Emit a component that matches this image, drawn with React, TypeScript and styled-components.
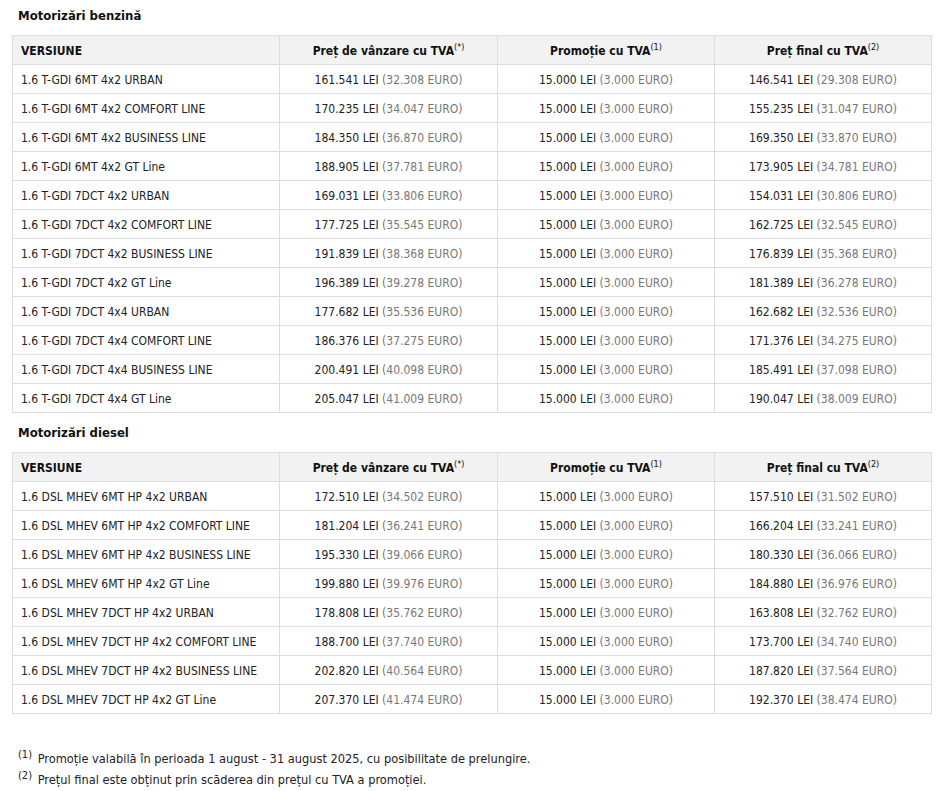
import React from "react";
import styled, { createGlobalStyle } from "styled-components";

const Global = createGlobalStyle`
  html, body { margin: 0; padding: 0; background: #fff; }
  body { font-family: "DejaVu Sans Condensed", "DejaVu Sans", Tahoma, sans-serif; color: #222; }
`;

const Page = styled.div`
  padding: 6px 12px 0 12px;
  width: 944px;
  box-sizing: border-box;
`;

const SectionTitle = styled.h3<{ $top?: number }>`
  margin: ${(p) => p.$top ?? 0}px 0 9px 0;
  padding-left: 6px;
  font-size: 13px;
  line-height: 20px;
  font-weight: bold;
  color: #111;
`;

const Table = styled.table`
  width: 919px;
  border-collapse: collapse;
  table-layout: fixed;
  font-size: 12px;
`;

const Th = styled.th<{ $align?: string }>`
  background: #f2f2f2;
  border: 1px solid #dddddd;
  height: 27px;
  padding: 1px 8px 0 8px;
  text-align: ${(p) => p.$align ?? "center"};
  font-weight: bold;
  color: #111;
  white-space: nowrap;
`;

const Td = styled.td<{ $align?: string }>`
  border: 1px solid #dddddd;
  height: 27px;
  padding: 1px 8px 0 8px;
  text-align: ${(p) => p.$align ?? "center"};
  color: #222;
  white-space: nowrap;
`;

const Sup = styled.sup`
  font-size: 9px;
  line-height: 0;
  vertical-align: 5px;
  font-weight: normal;
`;

const Euro = styled.span`
  color: #777;
`;

const Notes = styled.div`
  margin-top: 34px;
  padding-left: 6px;
  font-size: 12.7px;
  line-height: 21px;
  color: #222;
`;

const NoteSup = styled.sup`
  font-size: 11px;
  line-height: 0;
  vertical-align: 5px;
  margin-right: 2px;
`;

type Row = [string, string, string, string, string];

const benzina: Row[] = [
  ["1.6 T-GDI 6MT 4x2 URBAN", "161.541", "32.308", "146.541", "29.308"],
  ["1.6 T-GDI 6MT 4x2 COMFORT LINE", "170.235", "34.047", "155.235", "31.047"],
  ["1.6 T-GDI 6MT 4x2 BUSINESS LINE", "184.350", "36.870", "169.350", "33.870"],
  ["1.6 T-GDI 6MT 4x2 GT Line", "188.905", "37.781", "173.905", "34.781"],
  ["1.6 T-GDI 7DCT 4x2 URBAN", "169.031", "33.806", "154.031", "30.806"],
  ["1.6 T-GDI 7DCT 4x2 COMFORT LINE", "177.725", "35.545", "162.725", "32.545"],
  ["1.6 T-GDI 7DCT 4x2 BUSINESS LINE", "191.839", "38.368", "176.839", "35.368"],
  ["1.6 T-GDI 7DCT 4x2 GT Line", "196.389", "39.278", "181.389", "36.278"],
  ["1.6 T-GDI 7DCT 4x4 URBAN", "177.682", "35.536", "162.682", "32.536"],
  ["1.6 T-GDI 7DCT 4x4 COMFORT LINE", "186.376", "37.275", "171.376", "34.275"],
  ["1.6 T-GDI 7DCT 4x4 BUSINESS LINE", "200.491", "40.098", "185.491", "37.098"],
  ["1.6 T-GDI 7DCT 4x4 GT Line", "205.047", "41.009", "190.047", "38.009"],
];

const diesel: Row[] = [
  ["1.6 DSL MHEV 6MT HP 4x2 URBAN", "172.510", "34.502", "157.510", "31.502"],
  ["1.6 DSL MHEV 6MT HP 4x2 COMFORT LINE", "181.204", "36.241", "166.204", "33.241"],
  ["1.6 DSL MHEV 6MT HP 4x2 BUSINESS LINE", "195.330", "39.066", "180.330", "36.066"],
  ["1.6 DSL MHEV 6MT HP 4x2 GT Line", "199.880", "39.976", "184.880", "36.976"],
  ["1.6 DSL MHEV 7DCT HP 4x2 URBAN", "178.808", "35.762", "163.808", "32.762"],
  ["1.6 DSL MHEV 7DCT HP 4x2 COMFORT LINE", "188.700", "37.740", "173.700", "34.740"],
  ["1.6 DSL MHEV 7DCT HP 4x2 BUSINESS LINE", "202.820", "40.564", "187.820", "37.564"],
  ["1.6 DSL MHEV 7DCT HP 4x2 GT Line", "207.370", "41.474", "192.370", "38.474"],
];

const Price = ({ lei, euro }: { lei: string; euro: string }) => (
  <>
    {lei} LEI <Euro>({euro} EURO)</Euro>
  </>
);

const PriceTable = ({ rows }: { rows: Row[] }) => (
  <Table>
    <colgroup>
      <col style={{ width: 267 }} />
      <col style={{ width: 218 }} />
      <col style={{ width: 217 }} />
      <col style={{ width: 217 }} />
    </colgroup>
    <thead>
      <tr>
        <Th $align="left">VERSIUNE</Th>
        <Th>
          Preț de vânzare cu TVA<Sup>(*)</Sup>
        </Th>
        <Th>
          Promoție cu TVA<Sup>(1)</Sup>
        </Th>
        <Th>
          Preț final cu TVA<Sup>(2)</Sup>
        </Th>
      </tr>
    </thead>
    <tbody>
      {rows.map((r) => (
        <tr key={r[0]}>
          <Td $align="left">{r[0]}</Td>
          <Td>
            <Price lei={r[1]} euro={r[2]} />
          </Td>
          <Td>
            <Price lei="15.000" euro="3.000" />
          </Td>
          <Td>
            <Price lei={r[3]} euro={r[4]} />
          </Td>
        </tr>
      ))}
    </tbody>
  </Table>
);

export default function App() {
  return (
    <Page>
      <Global />
      <SectionTitle>Motorizări benzină</SectionTitle>
      <PriceTable rows={benzina} />
      <SectionTitle $top={10}>Motorizări diesel</SectionTitle>
      <PriceTable rows={diesel} />
      <Notes>
        <div>
          <NoteSup>(1)</NoteSup> Promoție valabilă în perioada 1 august - 31 august 2025, cu posibilitate de prelungire.
        </div>
        <div>
          <NoteSup>(2)</NoteSup> Prețul final este obținut prin scăderea din prețul cu TVA a promoției.
        </div>
      </Notes>
    </Page>
  );
}
